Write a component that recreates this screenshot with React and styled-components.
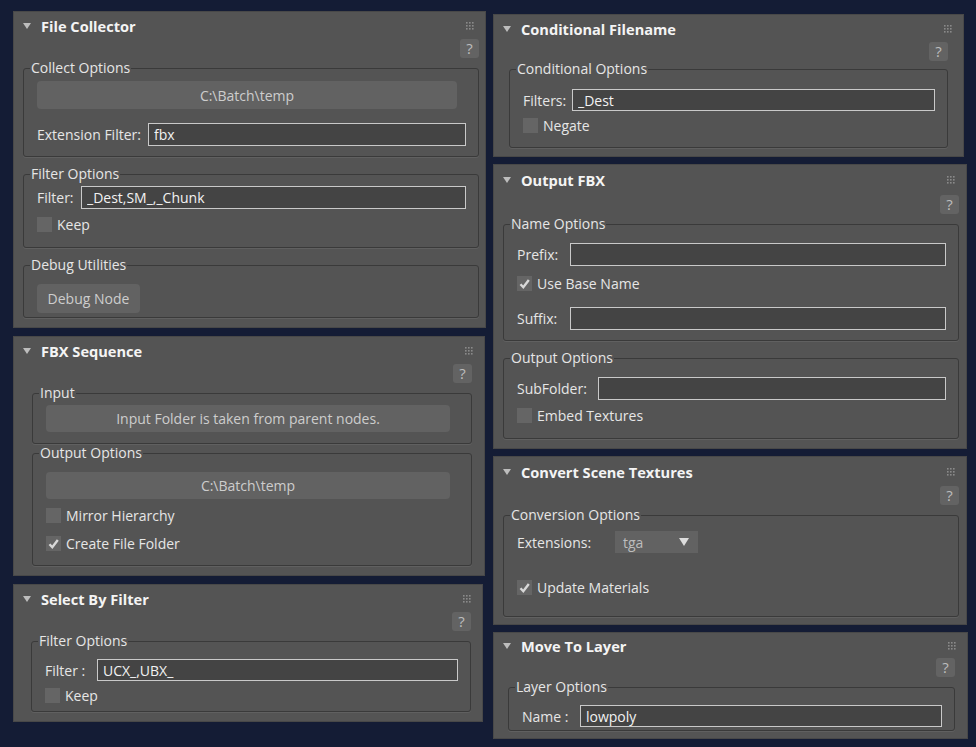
import React from 'react';
import styled, { createGlobalStyle } from 'styled-components';

const GlobalStyle = createGlobalStyle`
  * { box-sizing: border-box; }
  html, body { margin: 0; padding: 0; background: #141c35; }
  body {
    font-family: "Open Sans", "Noto Sans", sans-serif;
    font-size: 14px;
    color: #e4e4e4;
  }
`;

const Page = styled.div`
  display: flex;
  align-items: flex-start;
  gap: 7px;
  width: 976px;
  height: 747px;
  padding: 11px 0 0 13px;
  background: #141c35;
  overflow: hidden;
`;

const Column = styled.div`
  display: flex;
  flex-direction: column;
  align-items: flex-start;
  gap: ${p => p.$gap}px;
  margin-top: ${p => p.$top || 0}px;
`;

const Panel = styled.section`
  width: ${p => p.$w}px;
  background: #545454;
  border: 1px solid #484848;
`;

const Header = styled.div`
  display: flex;
  align-items: center;
  gap: 10px;
  height: ${p => p.$h || 27}px;
  padding: 0 11px 0 9px;
`;

const Caret = styled.span`
  width: 0;
  height: 0;
  border-left: 4px solid transparent;
  border-right: 4px solid transparent;
  border-top: 6px solid #bdbdbd;
`;

const Title = styled.h2`
  flex: 1;
  margin: 0;
  font-size: 14.6px;
  font-weight: 700;
  color: #f4f4f4;
  line-height: 18px;
`;

const Body = styled.div`
  padding: ${p => p.$pad};
`;

const HelpRow = styled.div`
  display: flex;
  justify-content: flex-end;
  margin-bottom: ${p => (p.$gap === undefined ? 1 : p.$gap)}px;
`;

const HelpButton = styled.button`
  width: 19px;
  height: 19px;
  padding: 0;
  border: none;
  border-radius: 3px;
  background: #636363;
  color: #bdbdbd;
  font-family: inherit;
  font-size: 15px;
  line-height: 19px;
  text-align: center;
`;

const Group = styled.fieldset`
  margin: ${p => p.$mt || 0}px 0 0;
  padding: ${p => p.$pt}px 12px ${p => p.$pb}px 13px;
  border: 1px solid #3a3a3a;
  border-radius: 3px;
  box-shadow: 0 1px 0 rgba(255, 255, 255, 0.07);
  min-width: 0;
`;

const Legend = styled.legend`
  margin-left: -7px;
  padding: 0 1px;
  font-size: 14px;
  line-height: 18px;
  color: #e6e6e6;
`;

const WideButton = styled.button`
  display: block;
  width: ${p => (p.$w ? `${p.$w}px` : 'calc(100% - 9px)')};
  height: ${p => p.$h}px;
  padding: 0;
  border: none;
  border-radius: 4px;
  background: #626262;
  color: #cdcdcd;
  font-family: inherit;
  font-size: 14px;
  text-align: center;
`;

const Row = styled.div`
  display: flex;
  align-items: center;
  margin-top: ${p => p.$mt || 0}px;
`;

const Label = styled.label`
  flex: none;
  width: ${p => p.$w}px;
  color: #e6e6e6;
  white-space: nowrap;
`;

const TextInput = styled.input`
  flex: 1;
  min-width: 0;
  height: ${p => p.$h || 23}px;
  padding: 0 0 0 5px;
  border: 1px solid #c9c9c9;
  background: #444444;
  color: #f2f2f2;
  font-family: inherit;
  font-size: 14px;
  outline: none;
`;

const CheckRow = styled.label`
  display: flex;
  align-items: center;
  gap: 5px;
  height: 15px;
  margin-top: ${p => p.$mt || 0}px;
  color: #e6e6e6;
`;

const Box = styled.span`
  display: flex;
  align-items: center;
  justify-content: center;
  width: 15px;
  height: 15px;
  background: #656565;
`;

const Select = styled.div`
  display: flex;
  align-items: center;
  justify-content: space-between;
  width: 83px;
  height: 22px;
  padding: 0 9px 0 8px;
  background: #626262;
  color: #bdbdbd;
`;

const SelectArrow = styled.span`
  width: 0;
  height: 0;
  border-left: 5px solid transparent;
  border-right: 5px solid transparent;
  border-top: 8px solid #dcdcdc;
`;

const Grip = () => (
  <svg width="8" height="8" viewBox="0 0 8 8">
    {[0, 3, 6].map(y =>
      [0, 3, 6].map(x => (
        <rect key={`${x}-${y}`} x={x} y={y} width="1.6" height="1.6" fill="#8a8a8a" />
      ))
    )}
  </svg>
);

const Check = ({ checked, children, mt }) => (
  <CheckRow $mt={mt}>
    <Box>
      {checked && (
        <svg width="13" height="13" viewBox="0 0 13 13">
          <path d="M2.5 7.2 L5.3 10.2 L10.8 3" fill="none" stroke="#d8d8d8" strokeWidth="2.4" />
        </svg>
      )}
    </Box>
    {children}
  </CheckRow>
);

const Node = ({ title, w, head, pad, helpGap, children }) => (
  <Panel $w={w}>
    <Header $h={head}>
      <Caret />
      <Title>{title}</Title>
      <Grip />
    </Header>
    <Body $pad={pad}>
      <HelpRow $gap={helpGap}>
        <HelpButton>?</HelpButton>
      </HelpRow>
      {children}
    </Body>
  </Panel>
);

export default function App() {
  return (
    <Page>
      <GlobalStyle />
      <Column $gap={8}>
        <Node title="File Collector" w={473} pad="0 6px 9px 9px">
          <Group $pt={4} $pb={10}>
            <Legend>Collect Options</Legend>
            <WideButton $h={28}>C:\Batch\temp</WideButton>
            <Row $mt={14}>
              <Label $w={111}>Extension Filter:</Label>
              <TextInput defaultValue="fbx" />
            </Row>
          </Group>
          <Group $mt={8} $pt={3} $pb={15}>
            <Legend>Filter Options</Legend>
            <Row>
              <Label $w={44}>Filter:</Label>
              <TextInput defaultValue="_Dest,SM_,_Chunk" />
            </Row>
            <Check mt={8}>Keep</Check>
          </Group>
          <Group $mt={8} $pt={10} $pb={4}>
            <Legend>Debug Utilities</Legend>
            <WideButton $w={103} $h={29}>Debug Node</WideButton>
          </Group>
        </Node>

        <Node title="FBX Sequence" w={472} pad="0 12px 9px 18px">
          <Group $pt={3} $pb={11}>
            <Legend>Input</Legend>
            <WideButton $h={27}>Input Folder is taken from parent nodes.</WideButton>
          </Group>
          <Group $pt={10} $pb={14}>
            <Legend>Output Options</Legend>
            <WideButton $h={27}>C:\Batch\temp</WideButton>
            <Check mt={9}>Mirror Hierarchy</Check>
            <Check mt={13} checked>Create File Folder</Check>
          </Group>
        </Node>

        <Node title="Select By Filter" w={470} pad="0 11px 9px 17px">
          <Group $pt={9} $pb={8}>
            <Legend>Filter Options</Legend>
            <Row>
              <Label $w={52}>Filter :</Label>
              <TextInput $h={22} defaultValue="UCX_,UBX_" />
            </Row>
            <Check mt={7}>Keep</Check>
          </Group>
        </Node>
      </Column>

      <Column $gap={7} $top={3}>
        <Node title="Conditional Filename" w={471} pad="0 15px 8px 15px" helpGap={-1}>
          <Group $pt={11} $pb={14}>
            <Legend>Conditional Options</Legend>
            <Row>
              <Label $w={49}>Filters:</Label>
              <TextInput $h={22} defaultValue="_Dest" />
            </Row>
            <Check mt={7}>Negate</Check>
          </Group>
        </Node>

        <Node title="Output FBX" w={474} head={30} pad="0 7px 9px 9px">
          <Group $pt={10} $pb={10}>
            <Legend>Name Options</Legend>
            <Row>
              <Label $w={53}>Prefix:</Label>
              <TextInput defaultValue="" />
            </Row>
            <Check mt={10} checked>Use Base Name</Check>
            <Row $mt={16}>
              <Label $w={53}>Suffix:</Label>
              <TextInput defaultValue="" />
            </Row>
          </Group>
          <Group $mt={8} $pt={10} $pb={15}>
            <Legend>Output Options</Legend>
            <Row>
              <Label $w={81}>SubFolder:</Label>
              <TextInput defaultValue="" />
            </Row>
            <Check mt={8}>Embed Textures</Check>
          </Group>
        </Node>

        <Node title="Convert Scene Textures" w={474} head={29} pad="0 7px 7px 9px">
          <Group $pt={7} $pb={21}>
            <Legend>Conversion Options</Legend>
            <Row>
              <Label $w={98}>Extensions:</Label>
              <Select>
                tga
                <SelectArrow />
              </Select>
            </Row>
            <Check mt={27} checked>Update Materials</Check>
          </Group>
        </Node>

        <Node title="Move To Layer" w={475} head={25} pad="0 12px 7px 14px">
          <Group $pt={9} $pb={3}>
            <Legend>Layer Options</Legend>
            <Row>
              <Label $w={58}>Name :</Label>
              <TextInput $h={22} defaultValue="lowpoly" />
            </Row>
          </Group>
        </Node>
      </Column>
    </Page>
  );
}
